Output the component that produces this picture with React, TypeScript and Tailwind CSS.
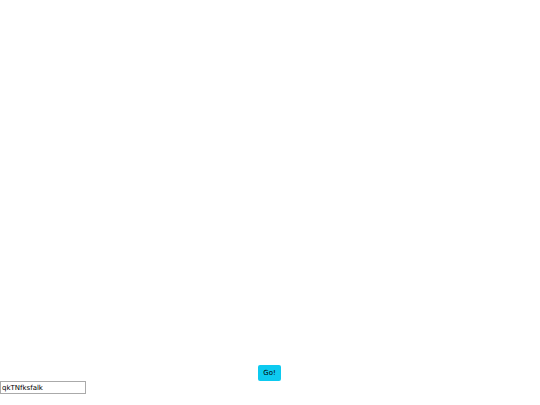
export default function App() {
  return (
    <div className="w-[540px] h-[405px] bg-white" style={{ fontFamily: '"DejaVu Sans", sans-serif' }}>
      <div className="h-[365px]" />
      <div className="flex justify-center">
        <button className="ml-[-1px] w-[23px] h-[16px] bg-[#0dcaf0] rounded-[2px] text-[7px] leading-none text-black flex items-center justify-center">
          Go!
        </button>
      </div>
      <input
        className="block w-[86px] h-[13px] border border-[#aaaaaa] text-[7px] px-[1px] leading-none outline-none text-black"
        defaultValue="qkTNfksfalk"
      />
    </div>
  );
}
